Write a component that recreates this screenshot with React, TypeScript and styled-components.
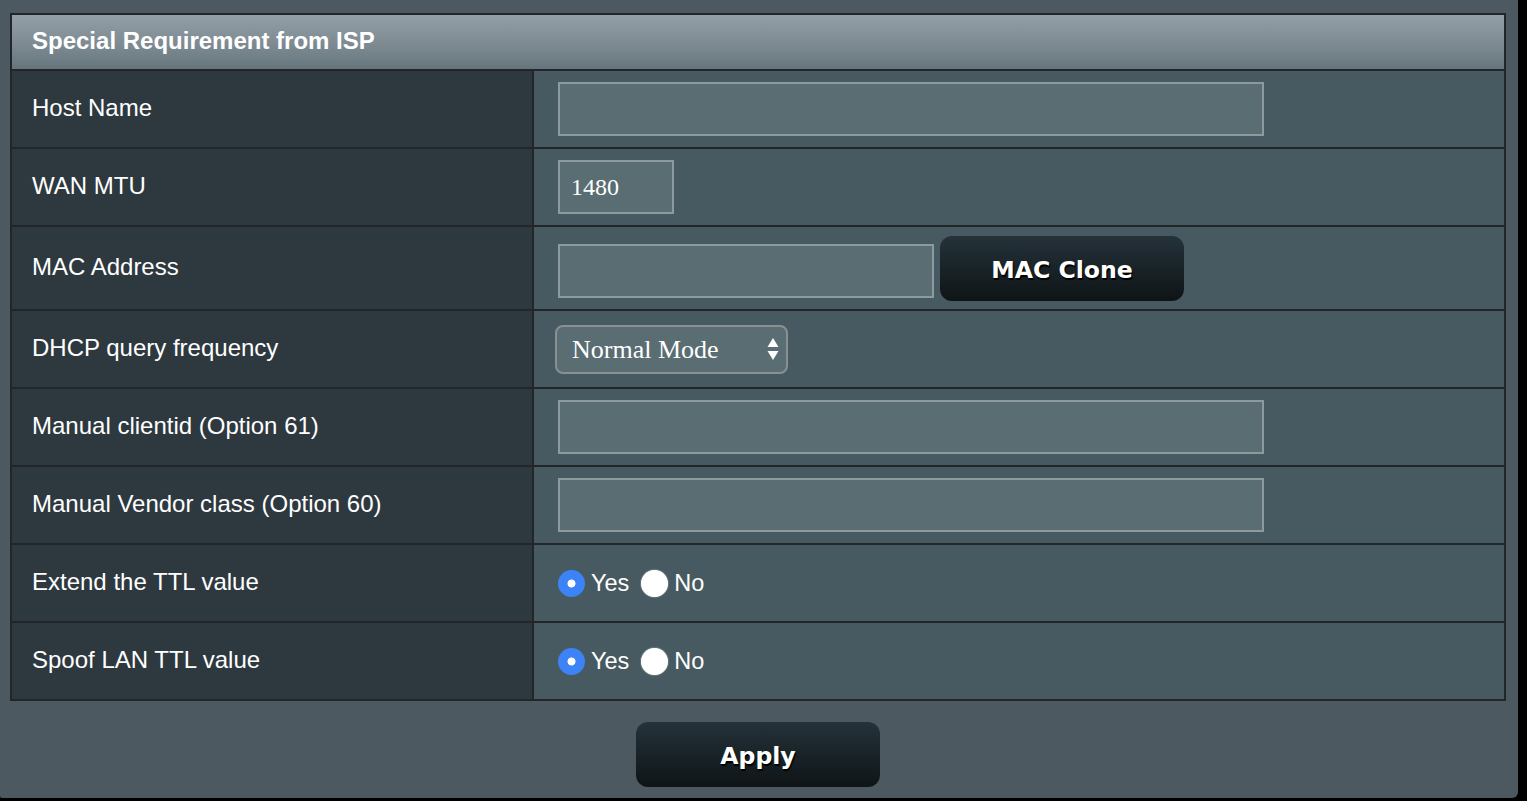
import React from 'react';
import styled, { createGlobalStyle } from 'styled-components';

const GlobalStyle = createGlobalStyle`
	html, body {
		margin: 0;
		padding: 0;
		background: #000;
	}
	body {
		font-family: "Liberation Sans", Arial, sans-serif;
	}
`;

const Page = styled.div`
	width: 1518px;
	height: 798px;
	box-sizing: border-box;
	padding: 13px 12px 0 10px;
	background: #4d5961;
	border-bottom-right-radius: 6px;
	border-bottom-left-radius: 2px;
	display: flex;
	flex-direction: column;
`;

const FormTable = styled.div`
	display: grid;
	grid-template-columns: 520px 1fr;
	gap: 2px;
	padding: 2px;
	background: #222629;
`;

const TableHeader = styled.div`
	grid-column: 1 / -1;
	height: 54px;
	display: flex;
	align-items: center;
	padding: 0 0 2px 20px;
	box-sizing: border-box;
	background: linear-gradient(to bottom, #939fa7 0%, #7d8a92 55%, #66757d 100%);
	color: #fff;
	font-size: 24px;
	font-weight: bold;
`;

const LabelCell = styled.div<{ $tall?: boolean }>`
	height: ${(p) => (p.$tall ? 82 : 76)}px;
	box-sizing: border-box;
	display: flex;
	align-items: center;
	padding: 0 0 2px 20px;
	background: #2e393f;
	color: #fff;
	font-size: 24px;
`;

const ValueCell = styled.div<{ $tall?: boolean }>`
	height: ${(p) => (p.$tall ? 82 : 76)}px;
	display: flex;
	align-items: center;
	padding-left: 24px;
	background: #475a61;
	color: #fff;
	font-size: 24px;
`;

const TextInput = styled.input<{ $width: number; $offset?: number }>`
	box-sizing: border-box;
	width: ${(p) => p.$width}px;
	height: 54px;
	margin: ${(p) => p.$offset || 0}px 0 0 0;
	padding: 0 11px;
	background: #596d72;
	border: 2px solid #8d9ba0;
	border-radius: 0;
	color: #fff;
	font-family: "Liberation Serif", "Times New Roman", serif;
	font-size: 24px;
	outline: none;
`;

const DarkButton = styled.button<{ $width: number }>`
	width: ${(p) => p.$width}px;
	height: 65px;
	padding: 3px 0 0;
	border: none;
	border-radius: 12px;
	background: linear-gradient(to bottom, #25323a 0%, #182226 55%, #0f1416 100%);
	color: #fff;
	font-family: "DejaVu Sans", Verdana, sans-serif;
	font-weight: bold;
	font-size: 23.6px;
	text-shadow: 1px 2px 1px #000;
	cursor: pointer;
`;

const CloneButton = styled(DarkButton)`
	margin-left: 6px;
`;

const SelectWrap = styled.div`
	position: relative;
	margin-left: -3px;
`;

const Select = styled.select`
	appearance: none;
	-webkit-appearance: none;
	box-sizing: border-box;
	width: 233px;
	height: 49px;
	padding: 0 40px 0 15px;
	background: #596d72;
	border: 2px solid #8a8f91;
	border-radius: 8px;
	color: #fff;
	font-family: "Liberation Serif", "Times New Roman", serif;
	font-size: 26px;
	outline: none;
`;

const SelectArrows = styled.svg`
	position: absolute;
	right: 9px;
	top: 13px;
	pointer-events: none;
`;

const RadioGroup = styled.div`
	display: flex;
	align-items: center;
`;

const RadioLabel = styled.label`
	display: flex;
	align-items: center;
	margin-right: 12px;
	font-size: 23.5px;
	cursor: pointer;
`;

const Radio = styled.input`
	appearance: none;
	-webkit-appearance: none;
	width: 27px;
	height: 27px;
	margin: 0 6px 0 0;
	border-radius: 50%;
	background: #fff;
	box-shadow: 0 0 1.5px rgba(255, 255, 255, 0.8);

	&:checked {
		background: radial-gradient(circle, #fff 0 3.6px, #3b83f6 4.4px);
		box-shadow: none;
	}
`;

const Footer = styled.div`
	display: flex;
	justify-content: center;
	padding-top: 21px;
`;

const YesNo = ({ name }: { name: string }) => (
	<RadioGroup>
		<RadioLabel>
			<Radio type="radio" name={name} defaultChecked />
			Yes
		</RadioLabel>
		<RadioLabel>
			<Radio type="radio" name={name} />
			No
		</RadioLabel>
	</RadioGroup>
);

const App = () => (
	<>
		<GlobalStyle />
		<Page>
			<FormTable>
				<TableHeader>Special Requirement from ISP</TableHeader>

				<LabelCell>Host Name</LabelCell>
				<ValueCell>
					<TextInput $width={706} />
				</ValueCell>

				<LabelCell>WAN MTU</LabelCell>
				<ValueCell>
					<TextInput $width={116} defaultValue="1480" />
				</ValueCell>

				<LabelCell $tall>MAC Address</LabelCell>
				<ValueCell $tall>
					<TextInput $width={376} $offset={5} />
					<CloneButton $width={244}>MAC Clone</CloneButton>
				</ValueCell>

				<LabelCell>DHCP query frequency</LabelCell>
				<ValueCell>
					<SelectWrap>
						<Select defaultValue="normal">
							<option value="normal">Normal Mode</option>
							<option value="aggressive">Aggressive Mode</option>
						</Select>
						<SelectArrows width="12" height="22" viewBox="0 0 12 22">
							<path d="M6 0 L11.5 9 L0.5 9 Z" fill="#fff" />
							<path d="M0.5 13 L11.5 13 L6 22 Z" fill="#fff" />
						</SelectArrows>
					</SelectWrap>
				</ValueCell>

				<LabelCell>Manual clientid (Option 61)</LabelCell>
				<ValueCell>
					<TextInput $width={706} />
				</ValueCell>

				<LabelCell>Manual Vendor class (Option 60)</LabelCell>
				<ValueCell>
					<TextInput $width={706} />
				</ValueCell>

				<LabelCell>Extend the TTL value</LabelCell>
				<ValueCell>
					<YesNo name="ttl_inc" />
				</ValueCell>

				<LabelCell>Spoof LAN TTL value</LabelCell>
				<ValueCell>
					<YesNo name="ttl_spoof" />
				</ValueCell>
			</FormTable>

			<Footer>
				<DarkButton $width={244}>Apply</DarkButton>
			</Footer>
		</Page>
	</>
);

export default App;
